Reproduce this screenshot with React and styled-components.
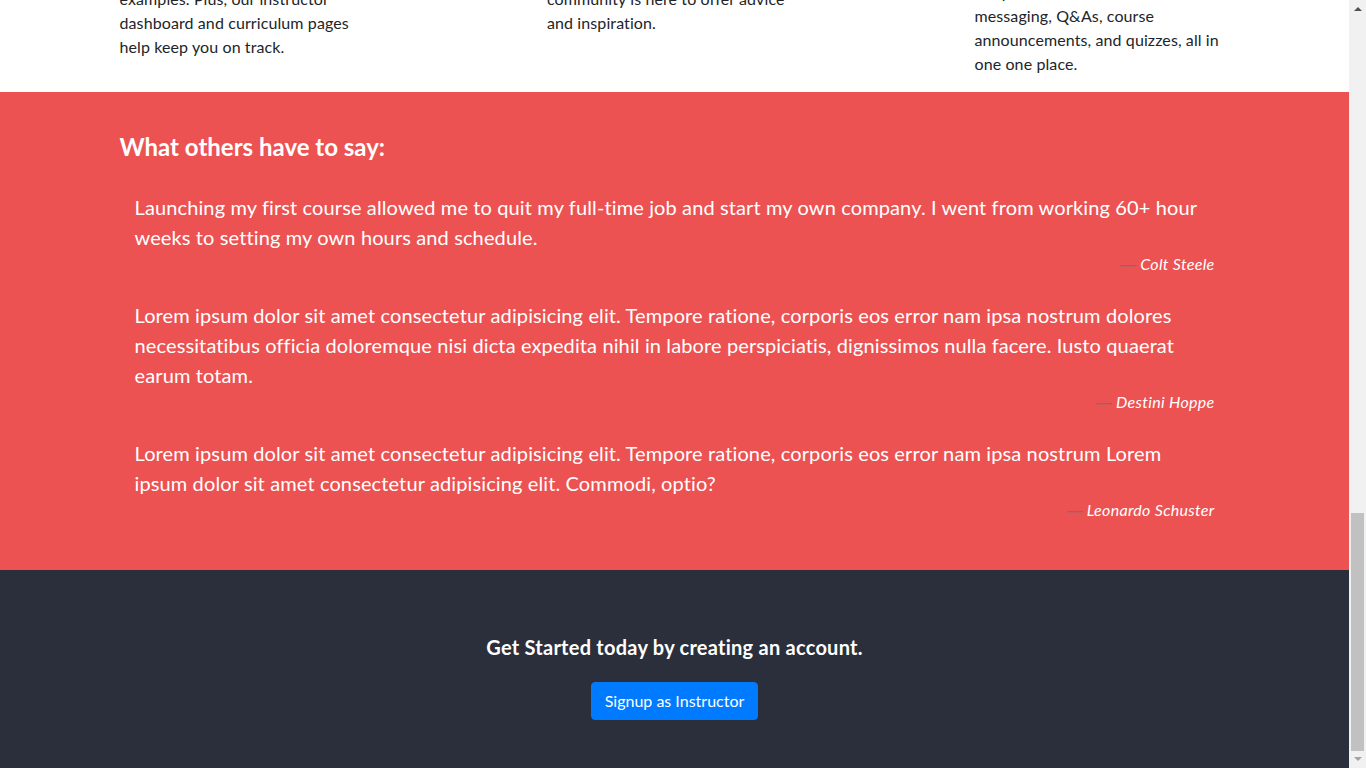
import React, { useLayoutEffect } from "react";
import styled, { createGlobalStyle } from "styled-components";
import { BookOpen, Video, Users, LifeBuoy, MessageCircle, Award } from "lucide-react";

const GlobalStyle = createGlobalStyle`
  html {
    scrollbar-width: none;
  }
  html::-webkit-scrollbar {
    display: none;
  }
  body {
    margin: 0;
    padding-right: 17px;
    font-family: Lato, "Noto Sans", sans-serif;
    font-size: 16px;
    line-height: 1.5;
    color: #212529;
    background: #fff;
  }
  *, *::before, *::after {
    box-sizing: border-box;
  }
`;

const Container = styled.div`
  width: 100%;
  max-width: 1140px;
  margin: 0 auto;
  padding: 0 15px;
`;

const Navbar = styled.nav`
  height: 56px;
  background: #2a2f3b;
  color: #fff;
  display: flex;
  align-items: center;
`;

const Brand = styled.span`
  font-size: 20px;
  font-weight: 700;
`;

const Hero = styled.header`
  height: 560px;
  background: #f4f5f7;
  display: flex;
  align-items: center;
  text-align: center;
`;

const HeroTitle = styled.h1`
  font-size: 48px;
  font-weight: 700;
  margin: 0 0 16px;
`;

const HeroText = styled.p`
  font-size: 20px;
  margin: 0;
  color: #555;
`;

const Features = styled.section`
  padding: 48px 0 0;
`;

const SectionTitle = styled.h2`
  font-size: 32px;
  font-weight: 700;
  text-align: center;
  margin: 0 0 48px;
`;

const Row = styled.div`
  display: flex;
  justify-content: space-between;
  margin: 0 -15px;
  & + & {
    margin-top: 32px;
  }
`;

const Col = styled.div`
  width: 285px;
  padding: ${(p) => p.$shift || 0}px 20px 0 15px;
`;

const IconWrap = styled.div`
  color: #ec5252;
  height: 48px;
  margin-bottom: 16px;
`;

const FeatureTitle = styled.h5`
  font-size: 20px;
  font-weight: 700;
  line-height: 24px;
  margin: 0 0 8px;
`;

const FeatureText = styled.p`
  margin: 0 0 16px;
  letter-spacing: 0.1px;
`;

const Testimonials = styled.section`
  background: #ec5252;
  color: #fff;
  padding: 41px 0 47px;
`;

const Heading = styled.h4`
  font-size: 24px;
  font-weight: 700;
  line-height: 1.2;
  margin: 0 0 30px;
`;

const Quote = styled.blockquote`
  margin: 0 0 23px;
  padding: 0 15px;
  &:last-child {
    margin-bottom: 0;
  }
`;

const QuoteText = styled.p`
  font-size: 20px;
  line-height: 30px;
  letter-spacing: 0.12px;
  margin: 0;
`;

const QuoteFooter = styled.footer`
  font-size: 16px;
  line-height: 24px;
  text-align: right;
  &::before {
    content: "\\2014\\00A0";
    font-family: "Liberation Sans", sans-serif;
    color: #6c757d;
  }
`;

const Cite = styled.cite`
  font-style: italic;
  color: #fff;
  letter-spacing: 0.3px;
`;

const Cta = styled.section`
  background: #2a2f3b;
  color: #fff;
  text-align: center;
  padding: 65px 0 48px;
`;

const CtaTitle = styled.h5`
  font-size: 20px;
  font-weight: 700;
  line-height: 24px;
  letter-spacing: 0.25px;
  margin: 0 0 23px;
`;

const Button = styled.button`
  font-family: inherit;
  font-size: 16px;
  line-height: 24px;
  padding: 6px 12.5px;
  border: 1px solid #007bff;
  border-radius: 4px;
  background: #007bff;
  color: #fff;
  cursor: pointer;
  display: inline-block;
  vertical-align: top;
`;

/* stand-in for the browser's vertical scrollbar, scrolled to the end */
const ScrollTrack = styled.div`
  position: fixed;
  top: 0;
  right: 0;
  width: 17px;
  height: 100vh;
  background: #f1f1f1;
  display: flex;
  flex-direction: column;
  align-items: center;
  justify-content: space-between;
  padding: 7px 0 7px;
`;

const Arrow = styled.div`
  width: 0;
  height: 0;
  border-left: 4px solid transparent;
  border-right: 4px solid transparent;
  ${(p) =>
    p.$down
      ? `border-top: 4px solid ${p.$color};`
      : `border-bottom: 4px solid ${p.$color};`}
`;

const Thumb = styled.div`
  position: absolute;
  left: 2px;
  right: 2px;
  bottom: 17px;
  height: 238px;
  background: #c1c1c1;
`;

const features = [
  [
    {
      icon: BookOpen,
      title: "Plan your curriculum",
      text: "Choose a topic you love and map out lectures, sections and resources. Our planning tools make it easy to organize your ideas from the very start.",
    },
    {
      icon: Video,
      title: "Record your video",
      text: "Use basic tools like a smartphone or a DSLR camera. Add a good microphone and you're ready to start recording your lectures.",
    },
    {
      icon: Users,
      title: "Build your audience",
      text: "Get your course online and start enrolling students. Promote it through social media and your own professional network.",
    },
  ],
  [
    {
      icon: LifeBuoy,
      title: "Get support",
      text: "Guides, templates and plenty of examples. Plus, our instructor dashboard and curriculum pages help keep you on track.",
      shift: 7,
    },
    {
      icon: MessageCircle,
      title: "Join the community",
      text: "A friendly and active instructor community is here to offer advice and inspiration.",
      shift: 7,
    },
    {
      icon: Award,
      title: "Engage your students",
      text: "Your students are never far away. Keep in touch with students via messaging, Q&As, course announcements, and quizzes, all in one one place.",
    },
  ],
];

const quotes = [
  {
    text: "Launching my first course allowed me to quit my full-time job and start my own company. I went from working 60+ hour weeks to setting my own hours and schedule.",
    name: "Colt Steele",
  },
  {
    text: "Lorem ipsum dolor sit amet consectetur adipisicing elit. Tempore ratione, corporis eos error nam ipsa nostrum dolores necessitatibus officia doloremque nisi dicta expedita nihil in labore perspiciatis, dignissimos nulla facere. Iusto quaerat earum totam.",
    name: "Destini Hoppe",
  },
  {
    text: "Lorem ipsum dolor sit amet consectetur adipisicing elit. Tempore ratione, corporis eos error nam ipsa nostrum Lorem ipsum dolor sit amet consectetur adipisicing elit. Commodi, optio?",
    name: "Leonardo Schuster",
  },
];

const App = () => {
  useLayoutEffect(() => {
    window.scrollTo(0, document.documentElement.scrollHeight);
  }, []);

  return (
    <>
      <GlobalStyle />
      <Navbar>
        <Container>
          <Brand>Teach Online</Brand>
        </Container>
      </Navbar>
      <Hero>
        <Container>
          <HeroTitle>Come teach with us</HeroTitle>
          <HeroText>Become an instructor and change lives — including your own.</HeroText>
        </Container>
      </Hero>
      <Features>
        <Container>
          <SectionTitle>How to begin</SectionTitle>
          {features.map((row, i) => (
            <Row key={i}>
              {row.map((f) => {
                const Icon = f.icon;
                return (
                  <Col key={f.title} $shift={f.shift}>
                    <IconWrap>
                      <Icon size={48} strokeWidth={1.5} />
                    </IconWrap>
                    <FeatureTitle>{f.title}</FeatureTitle>
                    <FeatureText>{f.text}</FeatureText>
                  </Col>
                );
              })}
            </Row>
          ))}
        </Container>
      </Features>
      <Testimonials>
        <Container>
          <Heading>What others have to say:</Heading>
          {quotes.map((q) => (
            <Quote key={q.name}>
              <QuoteText>{q.text}</QuoteText>
              <QuoteFooter>
                <Cite>{q.name}</Cite>
              </QuoteFooter>
            </Quote>
          ))}
        </Container>
      </Testimonials>
      <Cta>
        <CtaTitle>Get Started today by creating an account.</CtaTitle>
        <Button>Signup as Instructor</Button>
      </Cta>
      <ScrollTrack>
        <Arrow $color="#505050" />
        <Thumb />
        <Arrow $down $color="#a3a3a3" />
      </ScrollTrack>
    </>
  );
};

export default App;
